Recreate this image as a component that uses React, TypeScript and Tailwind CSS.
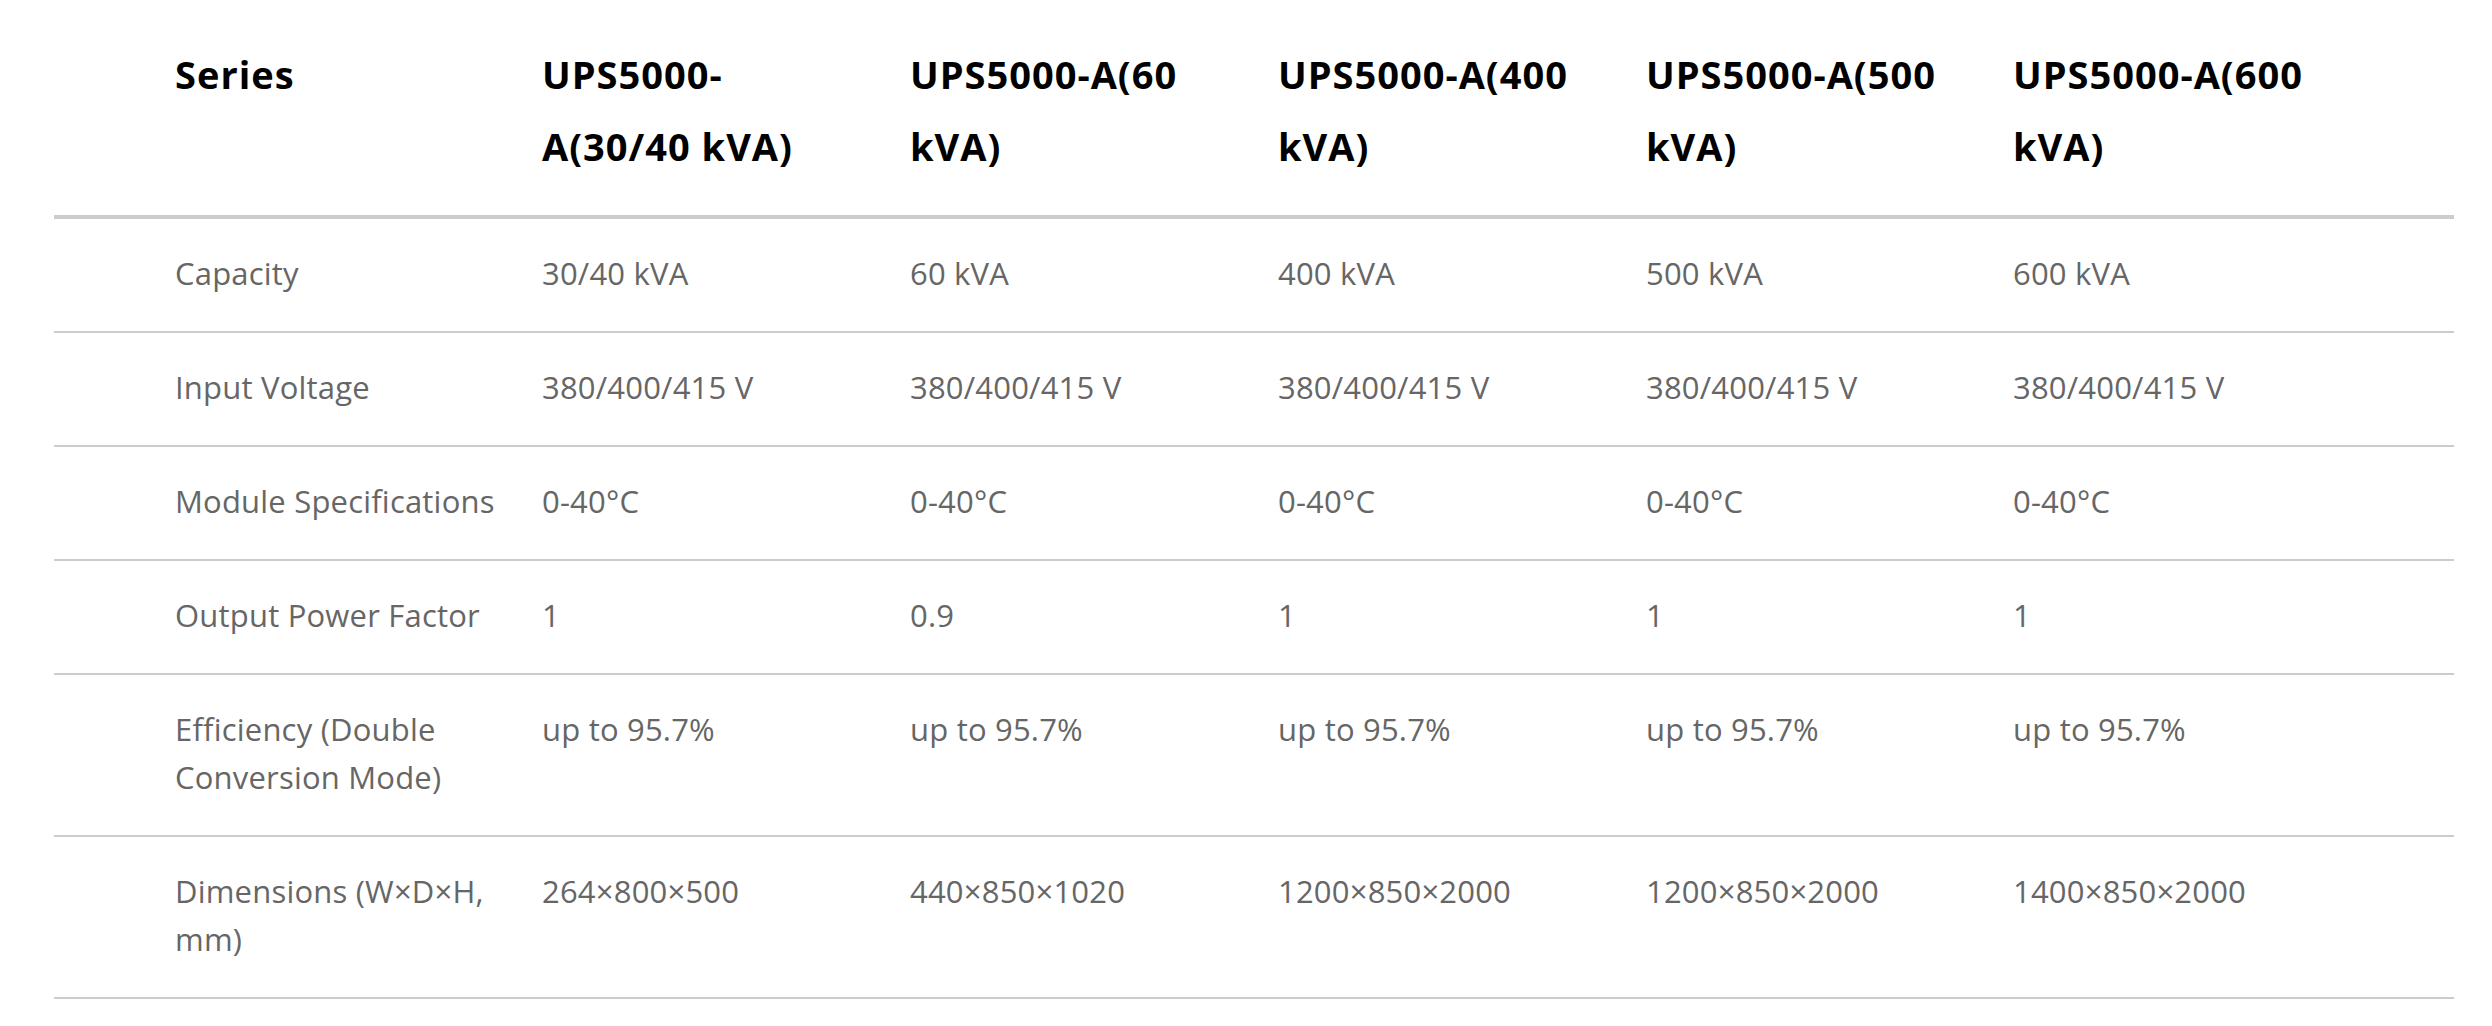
import React from 'react';

const headers = [
  'Series',
  'UPS5000-A(30/40 kVA)',
  'UPS5000-A(60 kVA)',
  'UPS5000-A(400 kVA)',
  'UPS5000-A(500 kVA)',
  'UPS5000-A(600 kVA)',
];

const rows: string[][] = [
  ['Capacity', '30/40 kVA', '60 kVA', '400 kVA', '500 kVA', '600 kVA'],
  ['Input Voltage', '380/400/415 V', '380/400/415 V', '380/400/415 V', '380/400/415 V', '380/400/415 V'],
  ['Module Specifications', '0-40°C', '0-40°C', '0-40°C', '0-40°C', '0-40°C'],
  ['Output Power Factor', '1', '0.9', '1', '1', '1'],
  ['Efficiency (Double Conversion Mode)', 'up to 95.7%', 'up to 95.7%', 'up to 95.7%', 'up to 95.7%', 'up to 95.7%'],
  ['Dimensions (W×D×H, mm)', '264×800×500', '440×850×1020', '1200×850×2000', '1200×850×2000', '1400×850×2000'],
];

const gridCols = 'grid grid-cols-[367px_368px_368px_368px_367px_1fr] pl-[121px]';

export default function App() {
  return (
    <div className="min-h-screen bg-white font-['Open_Sans',sans-serif]">
      <div className="ml-[54px] w-[2400px]">
        {/* header */}
        <div className={`${gridCols} border-b-4 border-[#cccccc] pt-[38px] pb-[33px]`}>
          {headers.map((h) => (
            <div key={h} className="pr-6">
              <div className="max-w-[302px] text-[38px] font-bold leading-[72px] tracking-[1px] text-black">{h}</div>
            </div>
          ))}
        </div>

        {/* body */}
        {rows.map((row) => (
          <div key={row[0]} className={`${gridCols} border-b-2 border-[#cccccc] pt-[30px] pb-[34px]`}>
            {row.map((cell, i) => (
              <div key={i} className="pr-6 text-[31px] leading-[48px] tracking-[0.2px] text-[#666666]">
                {cell}
              </div>
            ))}
          </div>
        ))}
      </div>
    </div>
  );
}
